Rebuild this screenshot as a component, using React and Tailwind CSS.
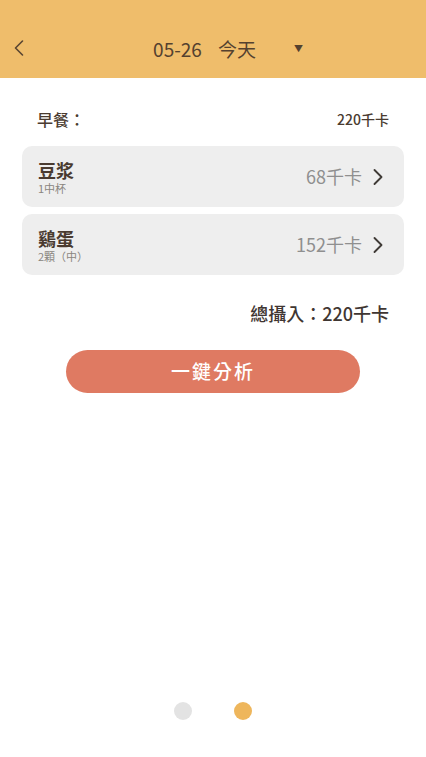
import { ChevronLeft, ChevronRight } from 'lucide-react'

const font = { fontFamily: '"Noto Sans CJK TC", "Noto Sans", sans-serif' }

const items = [
  { name: '豆浆', portion: '1中杯', kcal: '68千卡' },
  { name: '鷄蛋', portion: '2顆（中）', kcal: '152千卡' },
]

export default function App() {
  return (
    <div className="flex h-[757px] w-[426px] flex-col bg-white text-[#4a3b30]" style={font}>
      {/* header */}
      <div className="relative flex h-[78px] items-center justify-center bg-[#efbd6b] pt-[20px]">
        <ChevronLeft className="absolute left-[5px] top-[34px] h-[28px] w-[28px] text-[#5a4632]" strokeWidth={1.4} />
        <div className="flex items-center text-[19px] text-[#54412f]">
          <span className="ml-[30px]">05-26</span>
          <span className="ml-[16px]">今天</span>
          <span className="ml-[38px] text-[9px]">▼</span>
        </div>
      </div>

      {/* breakfast row */}
      <div className="mt-[30px] flex items-center justify-between px-[37px] text-[16px] leading-[22px]">
        <span className="font-medium">早餐：</span>
        <span className="text-[14px] font-medium">220千卡</span>
      </div>

      <div className="mt-[16px] flex flex-col gap-[7px] px-[22px]">
        {items.map((it) => (
          <div key={it.name} className="flex h-[61px] items-center justify-between rounded-[10px] bg-[#eeeeee] pl-[16px] pr-[12px]">
            <div className="flex flex-col">
              <span className="text-[18px] font-bold leading-[22px] text-[#4a3b30]">{it.name}</span>
              <span className="text-[11px] leading-[14px] text-[#8a8580]">{it.portion}</span>
            </div>
            <div className="flex items-center gap-[2px] text-[18px] text-[#8f8f8f]">
              <span>{it.kcal}</span>
              <ChevronRight className="h-[28px] w-[28px] text-[#3f3a36]" strokeWidth={1.6} />
            </div>
          </div>
        ))}
      </div>

      <div className="mt-[26px] flex justify-end px-[37px] text-[18px] font-medium leading-[24px] text-[#3f3632]">
        總攝入：220千卡
      </div>

      <div className="mt-[25px] flex justify-center">
        <button className="flex h-[43px] w-[294px] items-center justify-center rounded-full bg-[#df7a62] text-[19px] font-medium tracking-[2px] text-white">
          一鍵分析
        </button>
      </div>

      <div className="flex-1" />

      <div className="mb-[37px] flex justify-center gap-[42px]">
        <div className="h-[18px] w-[18px] rounded-full bg-[#e3e3e3]" />
        <div className="h-[18px] w-[18px] rounded-full bg-[#eeb65c]" />
      </div>
    </div>
  )
}
